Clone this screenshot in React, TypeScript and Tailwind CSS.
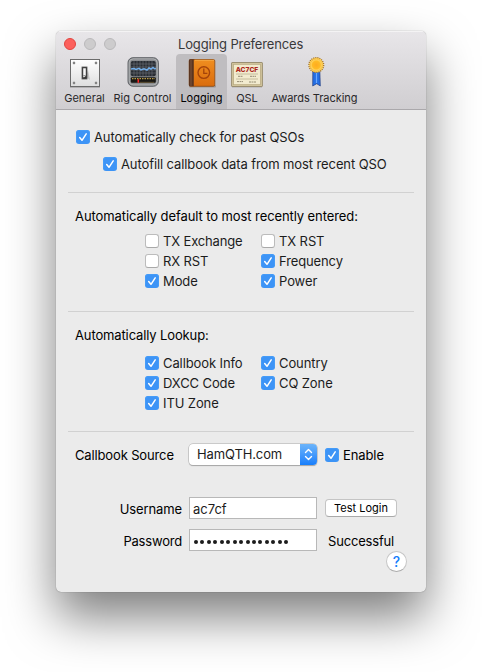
import type { ReactNode } from "react";

function Check({ label, on = true, track = "tracking-[-0.1px]" }: { label: string; on?: boolean; track?: string }) {
  return (
    <label className="flex h-[14px] items-center">
      {on ? (
        <svg className="h-[14px] w-[14px] shrink-0" viewBox="0 0 14 14">
          <rect width="14" height="14" rx="3" fill="#3d94f6" />
          <path d="M0.5 11.5v-8a3 3 0 0 1 3-3h7a3 3 0 0 1 3 3v8" fill="none" stroke="#459cf8" />
          <path d="M3.7 7.6 6 10.3 10.2 3.8" fill="none" stroke="#fff" strokeWidth="1.5" strokeLinecap="round" strokeLinejoin="round" />
        </svg>
      ) : (
        <span className="h-[14px] w-[14px] shrink-0 rounded-[3px] border border-[#bcbcbc] border-b-[#a9a9a9] bg-white" />
      )}
      <span className={`ml-1 whitespace-nowrap leading-4 ${track}`}>{label}</span>
    </label>
  );
}

function GeneralIcon() {
  return (
    <svg className="ml-px" width="32" height="32" viewBox="0 0 32 32">
      <defs>
        <linearGradient id="plate" x2="0" y2="1"><stop stopColor="#fff" /><stop offset="1" stopColor="#dedede" /></linearGradient>
      </defs>
      <rect x="1.5" y="3.5" width="29" height="27" fill="url(#plate)" stroke="#6b6b6b" />
      <path d="M1 31.5h30" stroke="#999" strokeOpacity=".6" />
      {[[5, 7], [27, 7], [5, 27], [27, 27]].map(([x, y]) => (
        <g key={`${x}-${y}`}><circle cx={x} cy={y} r="1.4" fill="#aaa" /><circle cx={x} cy={y} r=".7" fill="#444" /></g>
      ))}
      <path d="M17 21l4 3-2-10z" fill="#aaa" opacity=".6" />
      <rect x="13" y="11" width="5" height="12" fill="#333" stroke="#555" strokeWidth=".8" />
      <path d="M14.2 12.3h2.6v7.4l-1.5 1.5h-1.1z" fill="#f8f8f8" />
      <path d="M14.2 19.7h2.6" stroke="#888" />
    </svg>
  );
}

function RigIcon() {
  return (
    <svg width="32" height="32" viewBox="0 0 32 32">
      <rect x="1" y="1.7" width="30.4" height="28.6" rx="5" fill="#8b8d90" stroke="#55585c" strokeWidth=".9" />
      <rect x="2.2" y="2.9" width="28" height="26" rx="4" fill="none" stroke="#b9bbbd" strokeWidth=".8" />
      <rect x="3.8" y="5" width="25" height="15.2" rx="2" fill="#292d33" />
      <path d="M4 8h25M4 11h25M4 14h25M4 17h25M7 5v15M10 5v15M13 5v15M16 5v15M19 5v15M22 5v15M25 5v15" stroke="#6c7178" strokeWidth=".6" />
      <path d="M4 13l3-.5 2 1 3-1.2 2 1.5 3-1 3 1.2 2-2 2 1 2-1.5 1.5 1.3 1.5-.3" fill="none" stroke="#73aee9" strokeWidth="1.5" />
      <rect x="3.8" y="21.3" width="25" height="5.5" rx="1" fill="#191815" />
      <path d="M5 22.7h23" stroke="#b99b49" strokeWidth="1.2" strokeDasharray="1.5 1" />
      <path d="M11.3 23.3v3.5" stroke="#ff2929" strokeWidth="1.6" />
      <path d="M13 26.3h14" stroke="#725f32" strokeWidth=".7" />
    </svg>
  );
}

function BookIcon() {
  return (
    <svg width="32" height="32" viewBox="0 0 32 32">
      <defs>
        <linearGradient id="cover" x2="0" y2="1"><stop stopColor="#f08e20" /><stop offset="1" stopColor="#da6c0d" /></linearGradient>
      </defs>
      <rect x="3" y="29" width="27" height="2.5" rx="1" fill="#5c5148" opacity=".35" />
      <rect x="3.2" y="3.5" width="25.6" height="26.8" rx="1.5" fill="url(#cover)" stroke="#8d4a13" strokeWidth=".8" />
      <path d="M4 3.3h3.8v27H4a1 1 0 0 1-1-1v-25a1 1 0 0 1 1-1z" fill="#5b3520" />
      <path d="M5 3.8v26" stroke="#80563c" />
      <path d="M9 4.3h19" stroke="#f8b14e" strokeWidth=".8" />
      <circle cx="17.8" cy="16.6" r="5.8" fill="none" stroke="#a4430a" strokeWidth="1.4" />
      <path d="M17.8 12.5v4.8h3.6" fill="none" stroke="#a4430a" strokeWidth="1.3" />
    </svg>
  );
}

function CardIcon() {
  return (
    <svg width="32" height="32" viewBox="0 0 32 32">
      <path d="M1 31h30" stroke="#8b888c" strokeOpacity=".5" />
      <rect x=".6" y="6.5" width="30.8" height="24" rx=".5" fill="#d4c79f" stroke="#938768" strokeWidth=".9" />
      <rect x="2.5" y="8.3" width="27" height="20.4" fill="#f2ebcf" stroke="#b8aa82" strokeWidth=".8" />
      <text x="16" y="16" textAnchor="middle" textLength="22.5" lengthAdjust="spacingAndGlyphs" fontSize="6.7" fontWeight="800" fontFamily="Inter, sans-serif" fill="#ac281e">AC7CF</text>
      <path d="M5 18h22M5 23h22" stroke="#bdb38f" strokeWidth=".8" />
      <path d="M7 20.3h5M19 20.3h6M6 25.6h6M18 26h7" stroke="#958c73" strokeWidth="1" strokeDasharray="2 .5" />
    </svg>
  );
}

function AwardIcon() {
  return (
    <svg className="ml-[3px]" width="32" height="32" viewBox="0 0 32 32">
      <defs>
        <radialGradient id="medal"><stop stopColor="#ffab20" /><stop offset=".65" stopColor="#ffbb24" /><stop offset="1" stopColor="#ffe181" /></radialGradient>
      </defs>
      <path d="M12.8 14h7l.5 16-3.6-2.3-4 2.3z" fill="#246ee4" stroke="#253f81" strokeWidth=".7" />
      <path d="M16.5 17v10" stroke="#69a8ff" strokeWidth="1.2" />
      <circle cx="16.3" cy="9" r="7.4" fill="#ffd35b" stroke="#a57632" strokeWidth="1.3" strokeDasharray="1.1 1" />
      <circle cx="16.3" cy="9" r="6" fill="url(#medal)" stroke="#edac2c" strokeWidth=".6" />
    </svg>
  );
}

function Tab({ label, icon, width, active = false, track = "" }: { label: string; icon: ReactNode; width: string; active?: boolean; track?: string }) {
  return (
    <div className={`flex h-[55px] flex-col items-center pt-[2px] ${width} ${active ? "rounded-t-[4px] bg-[#bfbdc0]" : ""}`}>
      {icon}
      <span className={`mt-[3px] whitespace-nowrap text-[11px] leading-[14px] ${active ? "text-black" : "text-[#29282a]"} ${track}`}>{label}</span>
    </div>
  );
}

const separator = <div className="mx-3 h-px bg-[#d1d1d1]" />;

export default function App() {
  return (
    <main className="h-[672px] w-[482px] overflow-hidden bg-white pl-[56px] pt-[31px] font-['Inter',sans-serif] text-[13px] text-[#1c1c1c]">
      <div className="h-[561px] w-[370px] overflow-hidden rounded-[5px] bg-[#ebebeb] shadow-[0_0_1px_rgba(0,0,0,.5),0_25px_49px_rgba(0,0,0,.51)]">
        <header className="h-[79px] border-b border-[#aaa8ab] bg-linear-to-b from-[#e8e6e9] to-[#d0ced1] shadow-[inset_0_1px_0_#f4f3f4]">
          <div className="flex h-[23px] items-center">
            <div className="flex w-[60px] gap-2 pl-2 pt-[2px]">
              <span className="h-3 w-3 shrink-0 rounded-full border border-[#e2443f] bg-[#fc605c]" />
              <span className="h-3 w-3 shrink-0 rounded-full border border-[#bab9bb] bg-[#cdcccd]" />
              <span className="h-3 w-3 shrink-0 rounded-full border border-[#bab9bb] bg-[#cdcccd]" />
            </div>
            <h1 className="flex-1 whitespace-nowrap pl-[62px] pt-[3px] leading-4 tracking-[-0.14px] text-[#39383a]">Logging Preferences</h1>
          </div>
          <nav className="flex pl-1">
            <Tab label="General" icon={<GeneralIcon />} width="w-[49px]" />
            <Tab label="Rig Control" icon={<RigIcon />} width="w-[67px]" track="tracking-[0.04px]" />
            <Tab label="Logging" icon={<BookIcon />} width="w-[51px]" active />
            <Tab label="QSL" icon={<CardIcon />} width="w-[40px]" />
            <Tab label="Awards Tracking" icon={<AwardIcon />} width="w-[95px]" track="tracking-[-0.04px]" />
          </nav>
        </header>
        <section className="h-[82px] pl-5 pt-5">
          <Check label="Automatically check for past QSOs" track="tracking-[-0.11px]" />
          <div className="mt-[13px] pl-[27px]"><Check label="Autofill callbook data from most recent QSO" /></div>
        </section>
        {separator}
        <section className="h-[118px] pl-[19px] pt-[15px]">
          <h2 className="leading-4 tracking-[-0.09px] text-black">Automatically default to most recently entered:</h2>
          <div className="mt-[10px] grid grid-cols-[116px_1fr] gap-y-[6px] pl-[70px]">
            <Check label="TX Exchange" on={false} track="tracking-[-0.15px]" /><Check label="TX RST" on={false} />
            <Check label="RX RST" on={false} /><Check label="Frequency" track="tracking-[-0.12px]" />
            <Check label="Mode" /><Check label="Power" />
          </div>
        </section>
        {separator}
        <section className="h-[119px] pl-[19px] pt-[15px]">
          <h2 className="leading-4 tracking-[-0.13px] text-black">Automatically Lookup:</h2>
          <div className="mt-[13px] grid grid-cols-[116px_1fr] gap-y-[6px] pl-[70px]">
            <Check label="Callbook Info" /><Check label="Country" />
            <Check label="DXCC Code" /><Check label="CQ Zone" />
            <Check label="ITU Zone" />
          </div>
        </section>
        {separator}
        <section className="pt-3 text-black">
          <div className="flex h-[21px] items-center">
            <span className="w-[133px] whitespace-nowrap pl-[19px] leading-4 tracking-[-0.14px]">Callbook Source</span>
            <div className="flex h-[21px] w-[128px] overflow-hidden rounded-[4px] bg-white shadow-[0_0_0_.5px_#aaa,0_1px_1px_rgba(0,0,0,.3)]">
              <span className="flex-1 whitespace-nowrap pl-2 leading-[21px] tracking-[-0.12px] text-[#1c1c1c]">HamQTH.com</span>
              <span className="flex w-[17px] items-center justify-center bg-linear-to-b from-[#6bb4fa] to-[#157efb]">
                <svg width="9" height="13" viewBox="0 0 9 13"><path d="M1.5 4.5l3-3 3 3M1.5 8.5l3 3 3-3" fill="none" stroke="#fff" strokeWidth="1.4" strokeLinecap="round" strokeLinejoin="round" /></svg>
              </span>
            </div>
            <div className="ml-2 pt-px"><Check label="Enable" /></div>
          </div>
          <div className="mt-8 flex h-[22px] items-center">
            <span className="w-[126px] pt-[2px] text-right leading-4 tracking-[-0.12px]">Username</span>
            <div className="ml-[7px] h-[22px] w-[128px] border border-[#b8b8b8] bg-white pl-[3px] pt-px leading-5 text-[#1c1c1c]">ac7cf</div>
            <button className="ml-2 h-[18px] w-[72px] whitespace-nowrap rounded-[4px] border border-[#c4c4c4] border-b-[#a9a9a9] bg-white text-[11px] leading-4">Test Login</button>
          </div>
          <div className="mt-[10px] flex h-[22px] items-center">
            <span className="w-[126px] pt-[2px] text-right leading-4 tracking-[-0.2px]">Password</span>
            <div className="ml-[7px] flex h-[22px] w-[128px] items-center gap-[2.45px] border border-[#b8b8b8] bg-white pl-1 pt-[3px]">
              {Array.from({ length: 15 }, (_, i) => <span key={i} className="h-1 w-1 shrink-0 rounded-full bg-[#1c1c1c]" />)}
            </div>
            <span className="ml-[11px] pt-[2px] leading-4 tracking-[-0.18px]">Successful</span>
          </div>
          <div className="flex justify-end pr-[19px]">
            <button className="h-[21px] w-[21px] rounded-full border border-[#c6c6c6] border-b-[#ababab] bg-white text-[14px] font-medium leading-[19px] text-[#157efb]">?</button>
          </div>
        </section>
      </div>
    </main>
  );
}
